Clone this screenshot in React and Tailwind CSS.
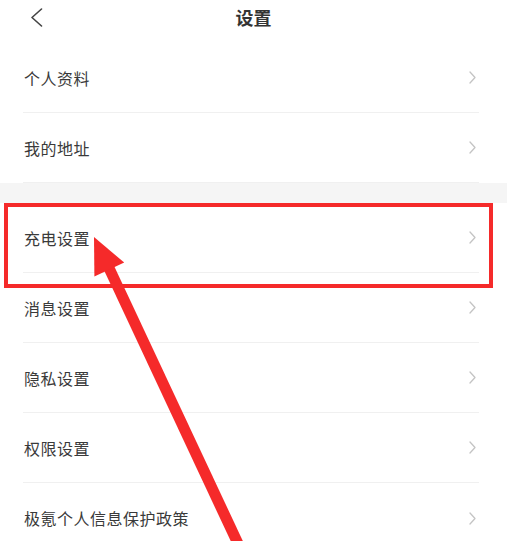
const groups = [
  ['个人资料', '我的地址'],
  ['充电设置', '消息设置', '隐私设置', '权限设置', '极氪个人信息保护政策'],
]

function Chevron() {
  return (
    <svg width="7" height="13" viewBox="0 0 7 13" fill="none" className="shrink-0">
      <path d="M1 1l5 5.5L1 12" stroke="#c4c4c4" strokeWidth="1.3" strokeLinecap="round" strokeLinejoin="round" />
    </svg>
  )
}

function Row({ label, last }) {
  return (
    <div className={`ml-[23px] mr-[28px] h-[70px] flex items-center justify-between pl-px pr-[3px] ${last ? '' : 'border-b border-[#f0f0f0]'}`}>
      <span className="text-[16px] text-[#3a3a3a] tracking-[0.5px]">{label}</span>
      <Chevron />
    </div>
  )
}

export default function App() {
  return (
    <div className="relative w-[507px] h-[541px] overflow-hidden bg-white font-['Noto_Sans_CJK_SC',sans-serif]">
      <div className="relative h-[43px] flex justify-center pt-[3px]">
        <svg width="13" height="20" viewBox="0 0 13 20" fill="none" className="absolute left-[30px] top-[8px]">
          <path d="M11.5 1L2 9.5l9.5 8.5" stroke="#444" strokeWidth="1.6" strokeLinecap="round" strokeLinejoin="round" />
        </svg>
        <h1 className="text-[18px] font-bold text-[#333] leading-[28px]">设置</h1>
      </div>

      <div>
        {groups[0].map((l) => <Row key={l} label={l} />)}
      </div>
      <div className="h-[20px] bg-[#f5f5f5]" />
      <div>
        {groups[1].map((l, i) => <Row key={l} label={l} last={i === groups[1].length - 1} />)}
      </div>

      {/* annotation */}
      <div className="absolute left-[4px] top-[203px] w-[489px] h-[85px] border-4 border-[#f52a2a]" />
      <svg className="absolute left-0 top-0" width="507" height="541" viewBox="0 0 507 541">
        <line x1="109" y1="268" x2="248" y2="565" stroke="#f52a2a" strokeWidth="11" />
        <polygon points="94,237 94.4,276.6 124.2,262.6" fill="#f52a2a" />
      </svg>
    </div>
  )
}
